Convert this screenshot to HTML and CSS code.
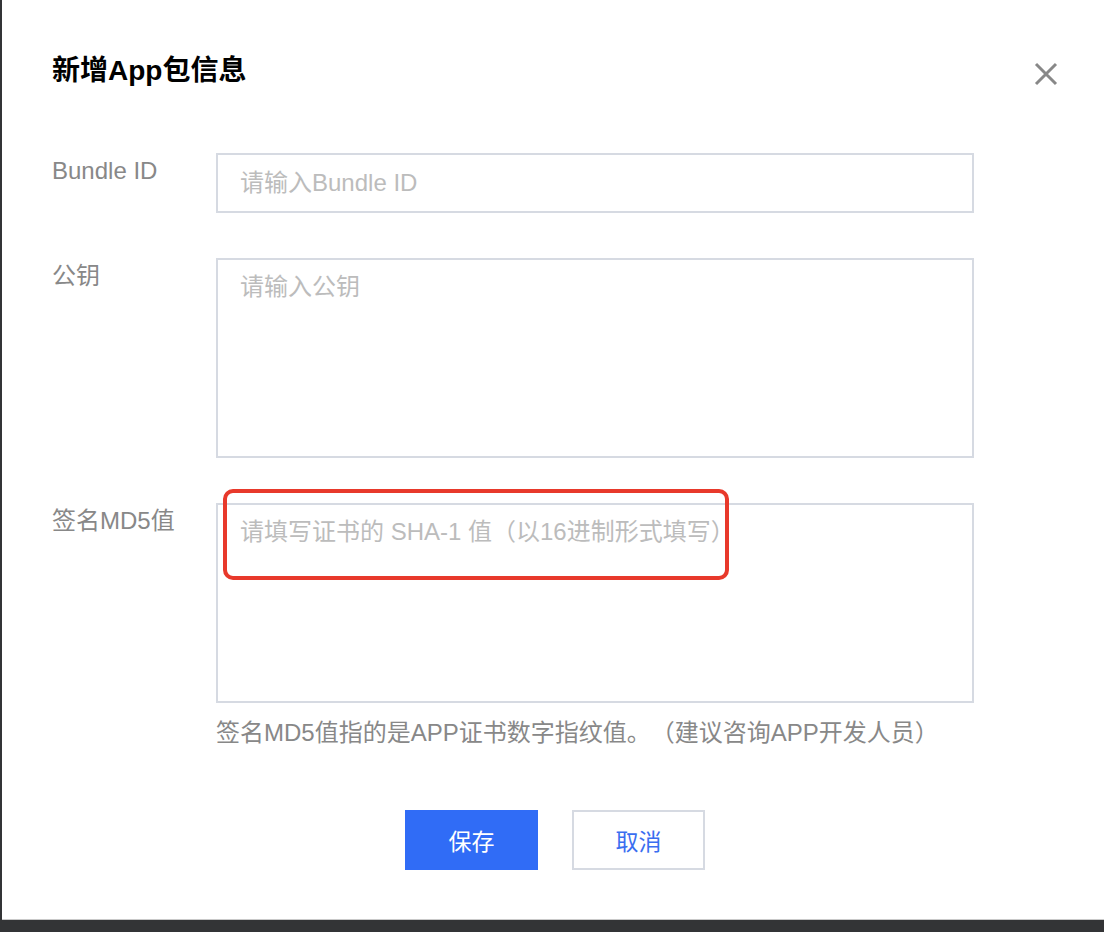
FILE: index.html
```html
<!DOCTYPE html>
<html lang="zh-CN">
<head>
    <meta charset="UTF-8">
    <meta name="viewport" content="width=device-width, initial-scale=1.0">
    <title>新增App包信息</title>
    <link rel="stylesheet" href="styles.css">
</head>
<body>
    <div class="dialog">
        <div class="dialog-header">
            <h1>新增App包信息</h1>
            <button class="close-btn" aria-label="关闭">
                <svg width="24" height="24" viewBox="0 0 24 24">
                    <path d="M2 2 L22 22 M22 2 L2 22" stroke="#888" stroke-width="3" fill="none"/>
                </svg>
            </button>
        </div>
        <div class="dialog-body">
            <div class="form-row">
                <label class="form-label">Bundle ID</label>
                <div class="form-field">
                    <input class="text-input" placeholder="请输入Bundle ID">
                </div>
            </div>
            <div class="form-row">
                <label class="form-label">公钥</label>
                <div class="form-field">
                    <textarea class="text-area" placeholder="请输入公钥"></textarea>
                </div>
            </div>
            <div class="form-row">
                <label class="form-label">签名MD5值</label>
                <div class="form-field">
                    <div class="area-wrap">
                        <textarea class="text-area" placeholder="请填写证书的 SHA-1 值（以16进制形式填写）"></textarea>
                        <!-- red annotation from the screenshot -->
                        <div class="mark-box"></div>
                    </div>
                    <p class="form-help">签名MD5值指的是APP证书数字指纹值。（建议咨询APP开发人员）</p>
                </div>
            </div>
        </div>
        <div class="dialog-footer">
            <button class="btn btn-primary">保存</button>
            <button class="btn btn-default">取消</button>
        </div>
    </div>
</body>
</html>
```

FILE: styles.css
```css
html, body {
    margin: 0;
    padding: 0;
}

body {
    background-color: #333436;
    height: 932px;
    font-family: "Liberation Sans", "Noto Sans CJK SC", sans-serif;
    text-spacing-trim: space-all;
}

.dialog {
    margin-left: 2px;
    height: 920px;
    box-sizing: border-box;
    background-color: #fff;
    border-bottom: 1px solid #c9c9c9;
    padding: 55px 46px 0 50px;
}

.dialog-header {
    display: flex;
    justify-content: space-between;
    align-items: center;
}

.dialog-header h1 {
    margin: 0;
    font-size: 28px;
    line-height: 32px;
    font-weight: bold;
    color: #000;
}

.close-btn {
    border: none;
    background: none;
    padding: 0;
    width: 24px;
    height: 24px;
    cursor: pointer;
    margin-top: 6px;
}

.close-btn svg {
    display: block;
}

.dialog-body {
    margin-top: 66px;
}

.form-row {
    display: grid;
    grid-template-columns: 164px 758px;
    margin-bottom: 45px;
}

.form-label {
    font-size: 24px;
    line-height: 30px;
    color: #888;
    padding-top: 3px;
}

.form-field {
    display: flex;
    flex-direction: column;
}

.text-input,
.text-area {
    box-sizing: border-box;
    width: 100%;
    border: 2px solid #d6dae2;
    border-radius: 0;
    font-family: inherit;
    font-size: 24px;
    color: #333;
    padding: 0 22px;
    outline: none;
    margin: 0;
}

.text-input {
    height: 60px;
}

.text-area {
    display: block;
    height: 200px;
    padding-top: 12px;
    line-height: 30px;
    resize: none;
}

.text-input::placeholder,
.text-area::placeholder {
    color: #bcbcbc;
}

.area-wrap {
    position: relative;
}

.mark-box {
    position: absolute;
    left: 7px;
    top: -14px;
    width: 506px;
    height: 91px;
    box-sizing: border-box;
    border: 4px solid #e8392b;
    border-radius: 10px;
}

.form-help {
    margin: 15px 0 0;
    font-size: 24px;
    line-height: 30px;
    color: #888;
}

.dialog-footer {
    display: flex;
    justify-content: center;
    gap: 34px;
    margin-top: 62px;
}

.btn {
    width: 133px;
    height: 60px;
    font-family: inherit;
    font-size: 23px;
    cursor: pointer;
    border-radius: 0;
    box-sizing: border-box;
}

.btn-primary {
    background-color: #306cf6;
    border: 1px solid #306cf6;
    color: #fff;
}

.btn-default {
    background-color: #fff;
    border: 2px solid #d6dae2;
    color: #3a6ef0;
}
```
